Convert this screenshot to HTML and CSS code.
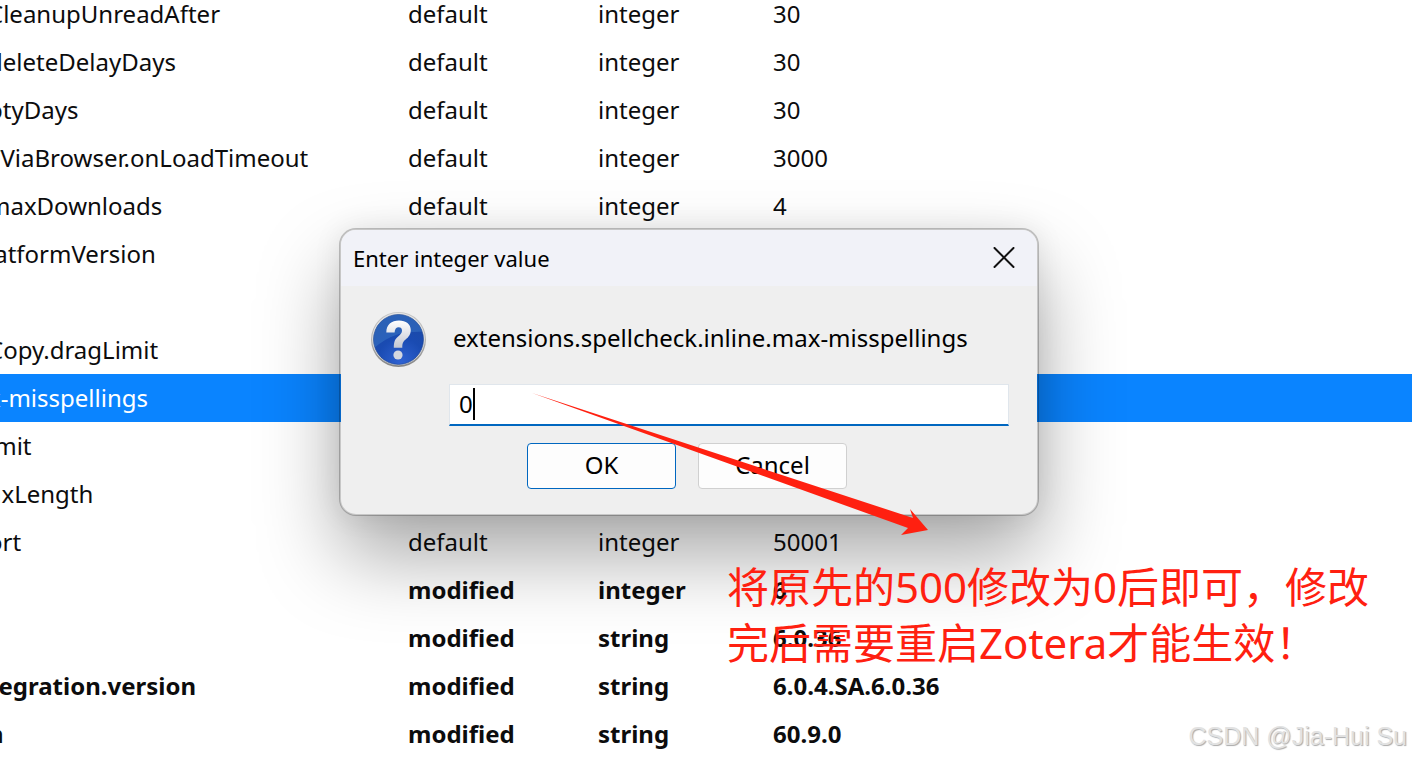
FILE: index.html
```html
<!DOCTYPE html>
<html lang="en">
<head>
    <meta charset="UTF-8">
    <meta name="viewport" content="width=device-width, initial-scale=1.0">
    <title>about:config</title>
    <link rel="stylesheet" href="styles.css">
</head>
<body>
    <table class="prefs">
        <colgroup>
            <col class="col-name">
            <col class="col-status">
            <col class="col-type">
            <col>
        </colgroup>
        <tbody>
            <tr><td>CleanupUnreadAfter</td><td>default</td><td>integer</td><td>30</td></tr>
            <tr><td>deleteDelayDays</td><td>default</td><td>integer</td><td>30</td></tr>
            <tr><td>ptyDays</td><td>default</td><td>integer</td><td>30</td></tr>
            <tr><td>FViaBrowser.onLoadTimeout</td><td>default</td><td>integer</td><td>3000</td></tr>
            <tr><td>maxDownloads</td><td>default</td><td>integer</td><td>4</td></tr>
            <tr><td>latformVersion</td><td></td><td></td><td></td></tr>
            <tr><td></td><td></td><td></td><td></td></tr>
            <tr><td>Copy.dragLimit</td><td></td><td></td><td></td></tr>
            <tr class="selected"><td>x-misspellings</td><td></td><td></td><td></td></tr>
            <tr><td>imit</td><td></td><td></td><td></td></tr>
            <tr><td>axLength</td><td></td><td></td><td></td></tr>
            <tr><td>ort</td><td>default</td><td>integer</td><td>50001</td></tr>
            <tr class="modified"><td></td><td>modified</td><td>integer</td><td>6</td></tr>
            <tr class="modified"><td></td><td>modified</td><td>string</td><td>6.0.36</td></tr>
            <tr class="modified"><td>tegration.version</td><td>modified</td><td>string</td><td>6.0.4.SA.6.0.36</td></tr>
            <tr class="modified"><td>n</td><td>modified</td><td>string</td><td>60.9.0</td></tr>
        </tbody>
    </table>

    <form class="dialog" role="dialog" aria-labelledby="dialog-title">
        <div class="dialog-header">
            <h1 id="dialog-title">Enter integer value</h1>
            <button type="button" class="close-button" aria-label="Close">
                <svg width="22" height="22" viewBox="0 0 22 22">
                    <path d="M1.5 1 L20.5 20 M20.5 1 L1.5 20" fill="none" stroke="#111" stroke-width="2" stroke-linecap="round"/>
                </svg>
            </button>
        </div>
        <div class="dialog-body">
            <svg class="question-icon" width="56" height="56" viewBox="0 0 56 56">
                <defs>
                    <linearGradient id="ring" x1="0" y1="0" x2="0" y2="1">
                        <stop offset="0" stop-color="#c4c4c4"/>
                        <stop offset="0.5" stop-color="#b4b4b4"/>
                        <stop offset="1" stop-color="#858585"/>
                    </linearGradient>
                    <radialGradient id="ball" cx="0.55" cy="0.95" r="0.8">
                        <stop offset="0" stop-color="#2f62d2"/>
                        <stop offset="0.6" stop-color="#1a4bb2"/>
                        <stop offset="1" stop-color="#1c4aa8"/>
                    </radialGradient>
                    <linearGradient id="mark" x1="0" y1="0" x2="0" y2="1">
                        <stop offset="0" stop-color="#ffffff"/>
                        <stop offset="1" stop-color="#c3c7d2"/>
                    </linearGradient>
                    <clipPath id="inside"><circle cx="27.5" cy="27.5" r="25"/></clipPath>
                </defs>
                <circle cx="27.5" cy="27.5" r="27.5" fill="url(#ring)"/>
                <circle cx="27.5" cy="27" r="26.3" fill="#e4e4e4"/>
                <circle cx="27.5" cy="27.5" r="25" fill="url(#ball)" stroke="#1d3f86" stroke-width="0.6"/>
                <path clip-path="url(#inside)" d="M0 0 H56 V20 Q40 19 28 22 Q12 27 0 39 Z" fill="#4484cc" fill-opacity="0.4"/>
                <path d="M15.3 20.5 C15.3 12.5 20.5 8.5 28 8.5 C35 8.5 39.8 12.2 39.8 18 C39.8 22.5 37.6 25 34.6 27.6 C32 29.8 31.3 31.5 31.3 35.7 H22.8 C22.8 29.6 24 27.2 27.2 24.5 C29.7 22.4 31 21 31 18.6 C31 16.3 29.8 15.2 27.7 15.2 C25.2 15.2 23.8 17 23.6 20.5 Z" fill="url(#mark)"/>
                <circle cx="27" cy="43" r="4.6" fill="#d4d7df"/>
            </svg>
            <label for="pref-value">extensions.spellcheck.inline.max-misspellings</label>
            <div class="field">
                <input type="text" id="pref-value" value="0">
            </div>
            <div class="buttons">
                <button type="submit" class="default">OK</button>
                <button type="button">Cancel</button>
            </div>
        </div>
    </form>

    <svg class="arrow" width="398" height="144" viewBox="0 0 398 144">
        <path d="M1 0 L382 125 L379 116 L397 137 L370 142 L377 135 Z" fill="#ff2010"/>
    </svg>
    <p class="note" lang="zh-CN">将原先的500修改为0后即可，修改<br>完后需要重启Zotera才能生效！</p>
    <div class="watermark">CSDN @Jia-Hui Su</div>
</body>
</html>
```
FILE: styles.css
```css
* {
    margin: 0;
    padding: 0;
    box-sizing: border-box;
}

body {
    position: relative;
    min-height: 100vh;
    overflow: hidden;
    background: #fff;
    color: #0c0c0d;
    font-family: 'Noto Sans', 'Open Sans', sans-serif;
    font-size: 24px;
}

/* Preference list, scrolled a little to the right and down */
.prefs {
    width: calc(100% + 12px);
    margin: -10px 0 0 -12px;
    table-layout: fixed;
    border-collapse: collapse;
}

.prefs td {
    height: 48px;
    line-height: 32px;
    vertical-align: middle;
    white-space: nowrap;
}

.col-name {
    width: 420px;
}

.col-status {
    width: 190px;
}

.col-type {
    width: 175px;
}

.selected {
    background: #0a84ff;
    color: #fff;
}

.modified {
    font-weight: bold;
}

/* Dialog */
.dialog {
    position: absolute;
    top: 228px;
    left: 339px;
    width: 700px;
    border: 2px solid rgba(0, 0, 0, 0.22);
    border-radius: 17px;
    background: #efefef;
    background-clip: padding-box;
    color: #000;
    box-shadow: 0 40px 80px rgba(0, 0, 0, 0.34), 0 0 28px rgba(0, 0, 0, 0.08);
}

.dialog-header {
    display: flex;
    align-items: center;
    justify-content: space-between;
    height: 56px;
    padding: 0 12px;
    border-radius: 15px 15px 0 0;
    background: #f1f2f8;
}

.dialog-header h1 {
    font-size: 22px;
    font-weight: normal;
}

.close-button {
    display: flex;
    padding: 10px;
    border: none;
    background: none;
}

.dialog-body {
    display: grid;
    grid-template-columns: 78px 1fr;
    align-items: center;
    padding: 26px 28px 25px 30px;
}

.dialog-body label {
    padding: 0 0 6px 4px;
}

.field {
    position: relative;
    grid-column: 2;
    margin-top: 16px;
}

.field input {
    display: block;
    width: 100%;
    height: 42px;
    padding: 0 9px 2px;
    border: 1px solid #e0e6ec;
    border-bottom: 2px solid #0067c0;
    outline: none;
    background: #fff;
    color: #000;
    font: inherit;
}

/* text cursor */
.field::after {
    content: '';
    position: absolute;
    top: 4px;
    left: 24px;
    width: 2px;
    height: 32px;
    background: #000;
}

.buttons {
    display: flex;
    grid-column: 1 / 3;
    justify-content: center;
    gap: 22px;
    margin-top: 17px;
    padding-right: 6px;
}

.buttons button {
    width: 149px;
    height: 46px;
    padding-bottom: 4px;
    border: 1px solid #d0d0d0;
    border-radius: 4px;
    background: #fdfdfd;
    color: #000;
    font: inherit;
}

.buttons .default {
    border-color: #0067c0;
}

/* Annotations */
.arrow {
    position: absolute;
    top: 393px;
    left: 531px;
}

.note {
    position: absolute;
    top: 559px;
    left: 727px;
    color: #ff2010;
    font-family: 'Noto Sans', 'Noto Sans CJK SC', sans-serif;
    font-size: 42px;
    line-height: 56px;
    white-space: nowrap;
}

.watermark {
    position: absolute;
    right: 5px;
    bottom: 10px;
    color: #e2e2e2;
    font-family: 'Liberation Sans', sans-serif;
    font-size: 25px;
    line-height: 32px;
    text-shadow: 1px 1px 1px #aaa;
}
```
